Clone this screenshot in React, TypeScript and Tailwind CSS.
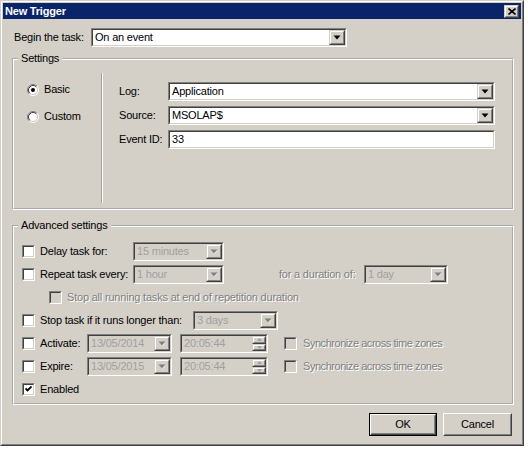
import type { ReactNode } from 'react'

const disabledText = 'text-[#808080] [text-shadow:1px_1px_0_#ffffff]'

function Raised({ children, className = '' }: { children?: ReactNode; className?: string }) {
	return (
		<div className={`flex border border-t-[#d4d0c8] border-l-[#d4d0c8] border-r-[#404040] border-b-[#404040] bg-[#d4d0c8] ${className}`}>
			<div className="flex flex-1 items-center justify-center border border-t-white border-l-white border-r-[#808080] border-b-[#808080]">
				{children}
			</div>
		</div>
	)
}

function Arrow({ disabled }: { disabled?: boolean }) {
	return (
		<svg width="8" height="5" viewBox="0 0 8 5">
			{disabled && <path d="M1.5 1.5h6l-3 3.5z" fill="#ffffff" />}
			<path d="M0.5 0.5h7l-3.5 4z" fill={disabled ? '#808080' : '#000000'} />
		</svg>
	)
}

function Sunken({ children, className = '', disabled }: { children?: ReactNode; className?: string; disabled?: boolean }) {
	return (
		<div className={`flex h-[19px] border border-t-[#808080] border-l-[#808080] border-r-white border-b-white ${className}`}>
			<div
				className={`flex min-w-0 flex-1 items-center border border-t-[#404040] border-l-[#404040] border-r-[#d4d0c8] border-b-[#d4d0c8] ${
					disabled ? 'bg-[#d4d0c8] text-[#a0a0a0]' : 'bg-white text-black'
				}`}
			>
				{children}
			</div>
		</div>
	)
}

function Select({ value, className, disabled }: { value: string; className?: string; disabled?: boolean }) {
	return (
		<Sunken className={className} disabled={disabled}>
			<span className="flex-1 truncate pl-[2px]">{value}</span>
			<Raised className="h-full w-[16px]">
				<Arrow disabled={disabled} />
			</Raised>
		</Sunken>
	)
}

function TimeField({ value }: { value: string }) {
	return (
		<Sunken className="w-[88px]" disabled>
			<span className="flex-1 truncate pl-[2px]">{value}</span>
			<div className="flex h-full w-[14px] flex-col">
				<Raised className="flex-1">
					<svg width="5" height="3" viewBox="0 0 5 3">
						<path d="M0 3h5l-2.5-3z" fill="#a0a0a0" />
					</svg>
				</Raised>
				<Raised className="flex-1">
					<svg width="5" height="3" viewBox="0 0 5 3">
						<path d="M0 0h5l-2.5 3z" fill="#a0a0a0" />
					</svg>
				</Raised>
			</div>
		</Sunken>
	)
}

function Check({ checked, disabled, className = '' }: { checked?: boolean; disabled?: boolean; className?: string }) {
	return (
		<div className={`flex h-[13px] w-[13px] shrink-0 border border-t-[#808080] border-l-[#808080] border-r-white border-b-white ${className}`}>
			<div
				className={`flex flex-1 items-center justify-center border border-t-[#404040] border-l-[#404040] border-r-[#d4d0c8] border-b-[#d4d0c8] ${
					disabled ? 'bg-[#d4d0c8]' : 'bg-white'
				}`}
			>
				{checked && (
					<svg width="7" height="7" viewBox="0 0 7 7">
						<path d="M0.5 2.5l2 2l4-4" fill="none" stroke="#000000" strokeWidth="1.8" />
					</svg>
				)}
			</div>
		</div>
	)
}

function Radio({ checked }: { checked?: boolean }) {
	return (
		<svg width="12" height="12" viewBox="0 0 12 12" className="shrink-0">
			<circle cx="6" cy="6" r="4.2" fill="#ffffff" />
			<path d="M2.11 9.89A5.5 5.5 0 0 1 9.89 2.11" fill="none" stroke="#808080" />
			<path d="M9.89 2.11A5.5 5.5 0 0 1 2.11 9.89" fill="none" stroke="#ffffff" />
			<path d="M2.82 9.18A4.5 4.5 0 0 1 9.18 2.82" fill="none" stroke="#404040" />
			<path d="M9.18 2.82A4.5 4.5 0 0 1 2.82 9.18" fill="none" stroke="#d4d0c8" />
			{checked && <circle cx="6" cy="6" r="2" fill="#000000" />}
		</svg>
	)
}

function Group({ title, children, className = '' }: { title: string; children: ReactNode; className?: string }) {
	return (
		<fieldset className={`ml-[9px] w-[502px] border-2 border-white [border-style:groove] ${className}`}>
			<legend className="ml-[4px] px-[3px] leading-[13px]">{title}</legend>
			{children}
		</fieldset>
	)
}

function Button({ label, isDefault }: { label: string; isDefault?: boolean }) {
	return (
		<div className={`flex h-[23px] ${isDefault ? 'w-[68px] border border-black' : 'w-[69px]'}`}>
			<div className="flex flex-1 border border-t-white border-l-white border-r-[#404040] border-b-[#404040]">
				<div className="flex flex-1 items-center justify-center border border-t-[#d4d0c8] border-l-[#d4d0c8] border-r-[#808080] border-b-[#808080]">
					{label}
				</div>
			</div>
		</div>
	)
}

function Row({ children }: { children: ReactNode }) {
	return <div className="ml-[8px] flex h-[19px] items-center">{children}</div>
}

export default function App() {
	return (
		<div className="h-[449px] w-[528px] bg-white font-['Liberation_Sans',Arial,sans-serif] text-[11px] leading-[13px] tracking-[-0.2px] text-black">
			<div className="flex h-[446px] w-[524px] flex-col border border-t-[#d4d0c8] border-l-[#d4d0c8] border-r-[#404040] border-b-[#404040] bg-[#d4d0c8]">
				<div className="flex flex-1 flex-col border border-t-white border-l-white border-r-[#808080] border-b-[#808080] p-px">
					{/* title bar */}
					<div className="flex h-[16px] items-center justify-between bg-[#0a246a] pl-[2px] pr-[2px]">
						<span className="font-bold text-white">New Trigger</span>
						<Raised className="h-[13px] w-[15px]">
							<svg width="8" height="7" viewBox="0 0 8 7">
								<path d="M0.5 0.5l7 6M7.5 0.5l-7 6" stroke="#000000" strokeWidth="1.6" />
							</svg>
						</Raised>
					</div>

					<div className="mt-[9px] flex items-center">
						<span className="ml-[11px] w-[77px]">Begin the task:</span>
						<Select value="On an event" className="w-[256px]" />
					</div>

					<Group title="Settings" className="mt-[5px]">
						<div className="mt-[8px] mb-[5px] flex h-[130px]">
							<div className="flex w-[87px] flex-col gap-[14px] pt-[10px] pl-[13px]">
								<div className="flex h-[13px] items-center gap-[5px]">
									<Radio checked />
									<span>Basic</span>
								</div>
								<div className="flex h-[13px] items-center gap-[5px]">
									<Radio />
									<span>Custom</span>
								</div>
							</div>
							<div className="h-full w-[2px] border-l border-l-[#a0a0a0] border-r border-r-white" />
							<div className="flex flex-col gap-[5px] pt-[9px] pl-[16px]">
								<div className="flex h-[19px] items-center">
									<span className="w-[49px]">Log:</span>
									<Select value="Application" className="w-[327px]" />
								</div>
								<div className="flex h-[19px] items-center">
									<span className="w-[49px]">Source:</span>
									<Select value="MSOLAP$" className="w-[327px]" />
								</div>
								<div className="flex h-[19px] items-center">
									<span className="w-[49px]">Event ID:</span>
									<Sunken className="w-[327px]">
										<span className="pl-[2px]">33</span>
									</Sunken>
								</div>
							</div>
						</div>
					</Group>

					<Group title="Advanced settings" className="mt-[9px]">
						<div className="flex flex-col gap-[4px] pt-[10px] pb-[4px]">
							<Row>
								<Check />
								<span className="ml-[5px] w-[93px]">Delay task for:</span>
								<Select value="15 minutes" className="w-[91px]" disabled />
							</Row>
							<Row>
								<Check />
								<span className="ml-[5px] w-[93px]">Repeat task every:</span>
								<Select value="1 hour" className="w-[91px]" disabled />
								<span className={`ml-[55px] w-[85px] ${disabledText}`}>for a duration of:</span>
								<Select value="1 day" className="w-[84px]" disabled />
							</Row>
							<Row>
								<Check disabled className="ml-[27px]" />
								<span className={`ml-[5px] ${disabledText}`}>
									Stop all running tasks at end of repetition duration
								</span>
							</Row>
							<Row>
								<Check />
								<span className="ml-[5px] w-[153px]">Stop task if it runs longer than:</span>
								<Select value="3 days" className="w-[85px]" disabled />
							</Row>
							<Row>
								<Check />
								<span className="ml-[5px] w-[47px]">Activate:</span>
								<Select value="13/05/2014" className="w-[85px]" disabled />
								<div className="ml-[8px]">
									<TimeField value="20:05:44" />
								</div>
								<Check disabled className="ml-[16px]" />
								<span className={`ml-[6px] tracking-[-0.45px] ${disabledText}`}>Synchronize across time zones</span>
							</Row>
							<Row>
								<Check />
								<span className="ml-[5px] w-[47px]">Expire:</span>
								<Select value="13/05/2015" className="w-[85px]" disabled />
								<div className="ml-[8px]">
									<TimeField value="20:05:44" />
								</div>
								<Check disabled className="ml-[16px]" />
								<span className={`ml-[6px] tracking-[-0.45px] ${disabledText}`}>Synchronize across time zones</span>
							</Row>
							<Row>
								<Check checked />
								<span className="ml-[5px]">Enabled</span>
							</Row>
						</div>
					</Group>

					<div className="mt-[8px] flex justify-end gap-[6px] pr-[9px]">
						<Button label="OK" isDefault />
						<Button label="Cancel" />
					</div>
				</div>
			</div>
		</div>
	)
}
